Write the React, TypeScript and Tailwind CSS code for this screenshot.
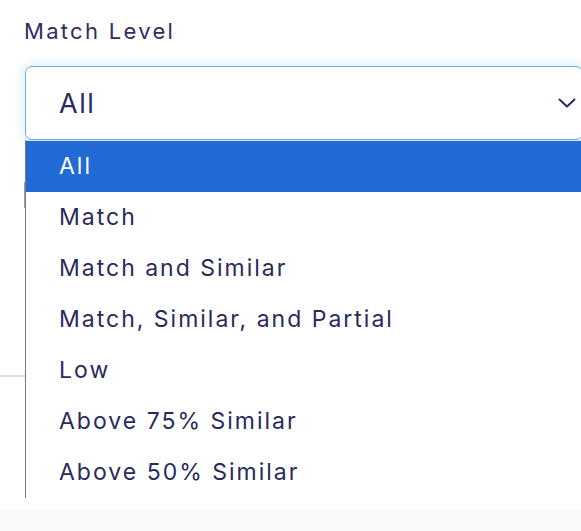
import React from "react";

const options = [
  "All",
  "Match",
  "Match and Similar",
  "Match, Similar, and Partial",
  "Low",
  "Above 75% Similar",
  "Above 50% Similar",
];

export default function App() {
  return (
    <div
      className="relative w-[581px] h-[531px] overflow-hidden bg-white text-[#2a2a5c]"
      style={{ fontFamily: "Inter, 'Open Sans', sans-serif" }}
    >
      <div className="flex flex-col h-full">
        <div className="flex-1 flex flex-col">
          <div className="pl-[24px] pt-[16px] text-[22px] leading-[30px] tracking-[2.3px] text-[#2e2d5e]">Match Level</div>
          <div className="ml-[25px] mt-[20px] w-[558px] h-[74px] rounded-[7px] border border-[#6aaee8] bg-white shadow-[0_0_10px_3px_rgba(106,174,232,0.18)] flex items-center justify-between pl-[33px] pr-[6px]">
            <span className="text-[27px] leading-none tracking-[1.6px]">All</span>
            <svg width="18" height="10" viewBox="0 0 18 10" fill="none">
              <path d="M1.5 1.5 L9 8.5 L16.5 1.5" stroke="#2a2a5c" strokeWidth="2" strokeLinecap="round" strokeLinejoin="round" />
            </svg>
          </div>
          <div className="ml-[24px] mt-[42px] w-[1px] h-[26px] bg-[#9a9a9a]" />
          <div className="mt-[167px] w-[25px] h-[2px] bg-[#dde1e6]" />
        </div>
        <div className="h-[22px] bg-[#f8f9fb]" />
      </div>

      <div className="absolute left-[25px] top-[140px] w-[570px] bg-white border-l border-[#7a7a7a] border-t border-t-[#dcdcdc] flex flex-col">
        {options.map((o, i) => (
          <div
            key={o}
            className={
              i === 0
                ? "h-[51px] flex items-center pl-[33px] text-[23px] tracking-[2px] bg-[#226bd5] text-white"
                : "h-[51px] flex items-center pl-[33px] text-[23px] tracking-[2px] text-[#2a2a5c]"
            }
          >
            {o}
          </div>
        ))}
      </div>
    </div>
  );
}
